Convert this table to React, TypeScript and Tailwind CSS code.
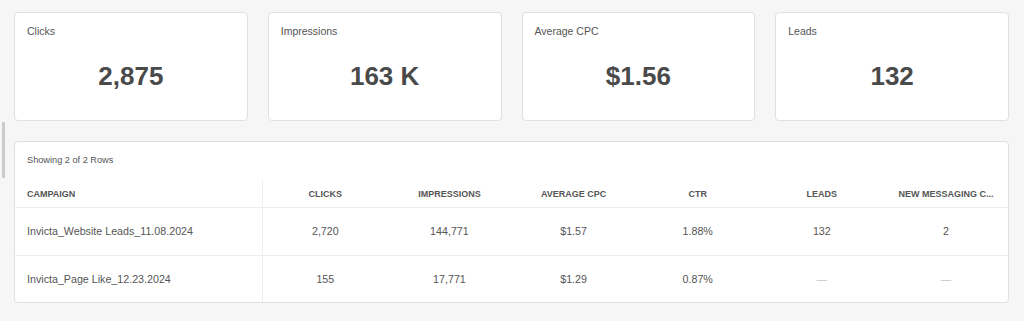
import React from "react";

const cards = [
  { label: "Clicks", value: "2,875" },
  { label: "Impressions", value: "163 K" },
  { label: "Average CPC", value: "$1.56" },
  { label: "Leads", value: "132" },
];

const headers = ["CLICKS", "IMPRESSIONS", "AVERAGE CPC", "CTR", "LEADS", "NEW MESSAGING C..."];

const rows = [
  { name: "Invicta_Website Leads_11.08.2024", vals: ["2,720", "144,771", "$1.57", "1.88%", "132", "2"] },
  { name: "Invicta_Page Like_12.23.2024", vals: ["155", "17,771", "$1.29", "0.87%", "—", "—"] },
];

export default function App() {
  return (
    <div
      className="relative w-[1024px] h-[321px] bg-[#f6f6f6] overflow-hidden"
      style={{ fontFamily: '"Liberation Sans", Arial, sans-serif' }}
    >
      <div className="absolute left-[2px] top-[122px] w-[3px] h-[56px] bg-[#cbcbcb] rounded-[1px]" />
      <div className="pl-[14px] pr-[15px] pt-[12px]">
        <div className="grid grid-cols-4 gap-x-[20px]">
          {cards.map((c) => (
            <div
              key={c.label}
              className="h-[109px] bg-white border border-[#e0e0e0] rounded-[4px] pt-[11px] px-[12px]"
            >
              <div className="text-[10.5px] leading-[14px] text-[#555]">{c.label}</div>
              <div className="mt-[23px] text-center text-[26px] leading-[30px] font-bold text-[#4a4a4a]">
                {c.value}
              </div>
            </div>
          ))}
        </div>

        <div className="mt-[20px] h-[162px] bg-white border border-[#e0e0e0] rounded-[4px] overflow-hidden">
          <div className="pt-[12px] pl-[12px] text-[9.2px] leading-[12px] text-[#555] h-[37px]">
            Showing 2 of 2 Rows
          </div>
          <div className="grid grid-cols-[2fr_1fr_1fr_1fr_1fr_1fr_1fr]">
            <div className="h-[28px] pt-[3px] flex items-center pl-[12px] border-r border-[#f0f0f0] text-[9px] font-bold text-[#555]">
              CAMPAIGN
            </div>
            {headers.map((h) => (
              <div
                key={h}
                className="h-[28px] pt-[3px] flex items-center justify-center text-[9px] font-bold text-[#555] whitespace-nowrap"
              >
                {h}
              </div>
            ))}
            {rows.map((r) => (
              <React.Fragment key={r.name}>
                <div className="h-[48px] flex items-center pl-[12px] border-r border-[#f0f0f0] border-t border-t-[#eeeeee] text-[10.7px] text-[#555]">
                  {r.name}
                </div>
                {r.vals.map((v, j) => (
                  <div
                    key={j}
                    className={`h-[48px] flex items-center justify-center border-t border-[#eeeeee] text-[10.7px] ${
                      v === "—" ? "text-[#c8c8c8]" : "text-[#555]"
                    }`}
                  >
                    {v}
                  </div>
                ))}
              </React.Fragment>
            ))}
          </div>
        </div>
      </div>
    </div>
  );
}
